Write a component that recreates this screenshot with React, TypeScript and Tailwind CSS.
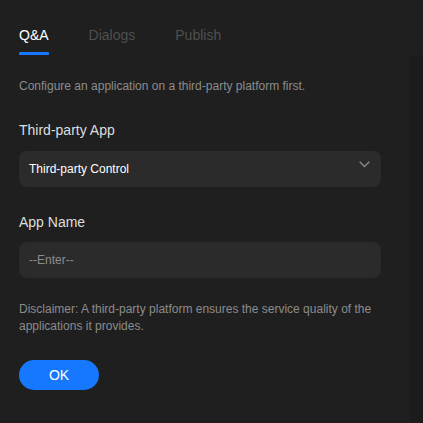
export default function App() {
  const tabs = ['Q&A', 'Dialogs', 'Publish']
  const active = 'Q&A'

  return (
    <div className="flex w-[423px] h-[423px] bg-[#1f1f1f] font-['Liberation_Sans',Arial,sans-serif] overflow-hidden">
      <div className="w-[409px] pl-[19px] pr-[28px] flex flex-col">
        {/* tabs */}
        <div className="flex gap-[40px] pt-[27px]">
          {tabs.map((t) => (
            <div key={t} className="flex flex-col">
              <span
                className={`text-[14px] leading-[16px] ${t === active ? 'text-white' : 'text-[#4f4f4f]'}`}
              >
                {t}
              </span>
              <div className={`mt-[9px] h-[3px] rounded-[1px] ${t === active ? 'bg-[#1677ff]' : 'bg-transparent'}`} />
            </div>
          ))}
        </div>

        <p className="mt-[23px] text-[12px] leading-[17px] text-[#8c8c8c]">
          Configure an application on a third-party platform first.
        </p>

        <label className="mt-[25px] text-[14px] leading-[20px] text-[#dedede]">Third-party App</label>
        <div className="mt-[11px] h-[36px] rounded-[8px] bg-[#2b2b2b] flex items-center justify-between pl-[10px] pr-[11px]">
          <span className="text-[12px] text-white">Third-party Control</span>
          <svg width="11" height="7" viewBox="0 0 11 7" className="-mt-[10px]" fill="none">
            <path d="M0.7 0.7 L5.5 5.5 L10.3 0.7" stroke="#8a8a8a" strokeWidth="1.3" />
          </svg>
        </div>

        <label className="mt-[25px] text-[14px] leading-[20px] text-[#dedede]">App Name</label>
        <div className="mt-[10px] h-[36px] rounded-[8px] bg-[#2b2b2b] flex items-center pl-[10px]">
          <span className="text-[12px] text-[#8c8c8c]">--Enter--</span>
        </div>

        <p className="mt-[23px] text-[12px] leading-[17px] text-[#8c8c8c]">
          Disclaimer: A third-party platform ensures the service quality of the applications it provides.
        </p>

        <button className="mt-[25px] w-[80px] h-[30px] rounded-full bg-[#1677ff] text-white text-[14px]">
          OK
        </button>
      </div>
      <div className="w-[14px] flex flex-col">
        <div className="h-[55px] bg-[#1f1f1f]" />
        <div className="flex-1 bg-[#1c1c1c]" />
      </div>
    </div>
  )
}
